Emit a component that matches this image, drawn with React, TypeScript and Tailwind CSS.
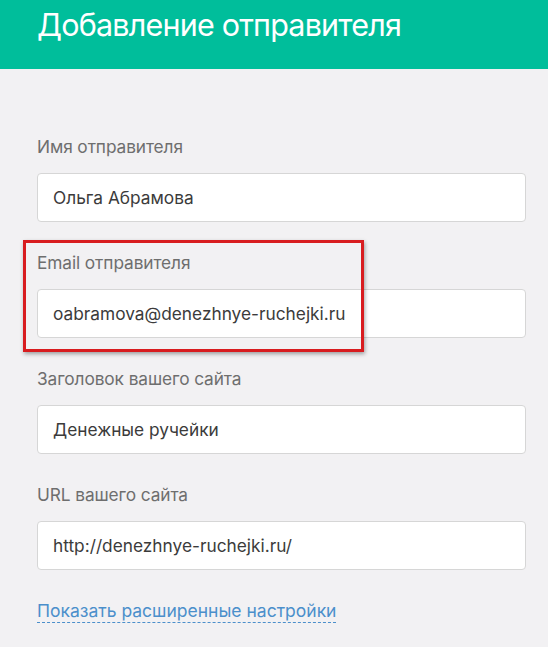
const fields = [
  { label: "Имя отправителя", value: "Ольга Абрамова" },
  { label: "Email отправителя", value: "oabramova@denezhnye-ruchejki.ru", marked: true },
  { label: "Заголовок вашего сайта", value: "Денежные ручейки" },
  { label: "URL вашего сайта", value: "http://denezhnye-ruchejki.ru/" },
];

export default function App() {
  return (
    <div className="min-h-[647px] w-[548px] bg-[#f2f1f3] font-['Inter',sans-serif] overflow-hidden">
      <div className="h-[69px] bg-[#00be9b] pl-[37px] flex items-start">
        <h1 className="text-white text-[30.5px] leading-[48px] font-normal tracking-[-0.8px] mt-[1px]">
          Добавление отправителя
        </h1>
      </div>

      <div className="px-[37px] pt-[66px] pr-[22px]">
        {fields.map((f) => (
          <div key={f.label} className="relative mb-[29px]">
            {f.marked && (
              <div className="absolute left-[-14px] top-[-11px] w-[341px] h-[112px] border-[3px] border-[#d81c1f] shadow-[1px_2px_4px_rgba(0,0,0,0.35)] pointer-events-none" />
            )}
            <div className="text-[17.3px] leading-[24px] text-[#6e6e6e] tracking-[-0.1px]">{f.label}</div>
            <div className="mt-[14px] h-[49px] bg-white border border-[#d6d6d6] rounded-[4px] flex items-center px-[15px] text-[17.3px] text-[#3b3b3b]">
              {f.value}
            </div>
          </div>
        ))}

        <a className="inline-block -mt-[2px] text-[17.5px] leading-[22px] text-[#4b8fcb] border-b border-dashed border-[#4b8fcb] cursor-pointer">
          Показать расширенные настройки
        </a>
      </div>
    </div>
  );
}
